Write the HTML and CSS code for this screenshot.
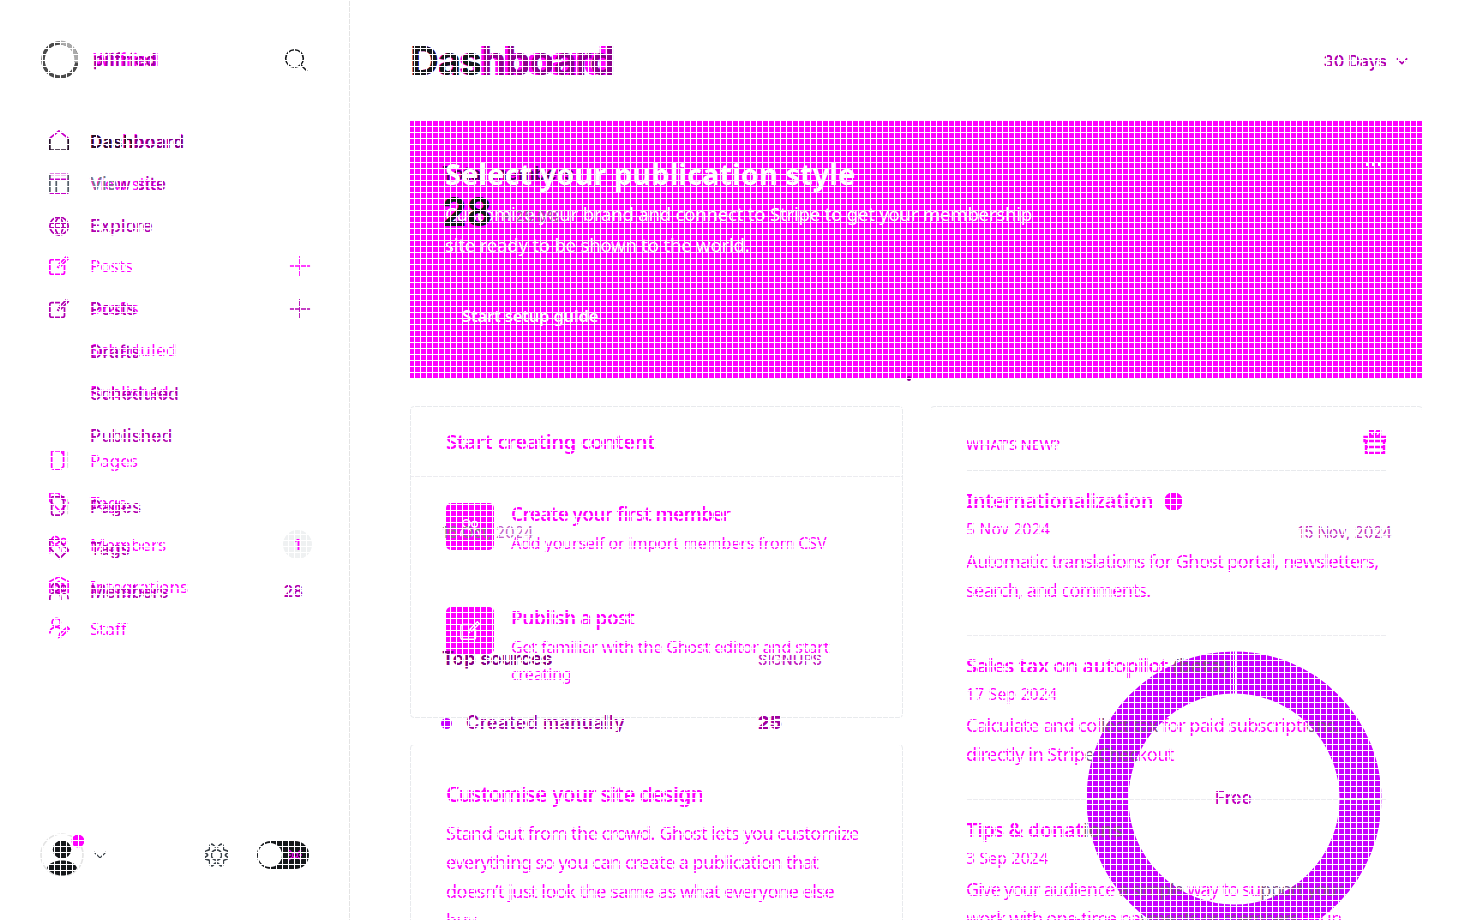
FILE: index.html
```html
<!DOCTYPE html>
<html lang="en">
<head>
<meta charset="utf-8">
<title>Dashboard</title>
<link rel="stylesheet" href="styles.css">
</head>
<body>
<svg width="0" height="0" class="defs" aria-hidden="true">
  <defs>
    <symbol id="edit" viewBox="0 0 24 24"><path d="M14 5H4a2 2 0 0 0-2 2v12a2 2 0 0 0 2 2h12a2 2 0 0 0 2-2v-9M10 12.500l2 1.500M12 10l8-8 2 2-8 8z"/></symbol>
    <symbol id="page" viewBox="0 0 24 24"><path d="M4 2h13v18M14 22H6a2 2 0 0 1-2-2V2M13 2l4 4M17 19l-3 3"/><path d="M21 3v18" stroke="#ddd"/></symbol>
    <symbol id="tag" viewBox="0 0 24 24"><path d="M2 2h9l11 11-9 9L2 11zM7 7h.1"/></symbol>
    <symbol id="members" viewBox="0 0 24 24"><circle cx="8" cy="8" r="4"/><circle cx="17" cy="9" r="3"/><path d="M2 22v-3c0-7 12-7 12 0v3M16 15c4-1 6 2 6 6"/></symbol>
    <symbol id="plus" viewBox="0 0 24 24"><path d="M12 1v22M1 12h22"/></symbol>
    <symbol id="chev" viewBox="0 0 14 8"><path d="M1 1l6 6 6-6"/></symbol>
  </defs>
</svg>
<div class="app">
  <aside class="sidebar">
    <header class="brand">
      <svg class="logo" viewBox="0 0 40 40"><circle cx="20" cy="20" r="17" stroke="#4a4a4a" stroke-width="3.500"/><path d="M20 2.500a17 17 0 0 1 16 20" stroke="#aaa" stroke-width="4"/></svg>
      <div class="stack brandname"><span class="b">Wilfried</span><span class="a">pilfried</span></div>
      <svg class="search" viewBox="0 0 24 24"><circle cx="10.500" cy="10.500" r="8.800"/><path d="M17 17l6 6"/></svg>
    </header>
    <div class="stack navs">
      <nav class="nav navb">
        <div class="row"><i></i><span class="bold">Dashboard</span></div>
        <div class="row"><i></i><span>View site</span></div>
        <div class="row g1"><svg><use href="#edit"/></svg><span>Posts</span><svg class="end"><use href="#plus"/></svg></div>
        <div class="row"><i></i><span>Drafts</span></div>
        <div class="row"><i></i><span class="wide">Scheduled</span></div>
        <div class="row"><i></i><span>Published</span></div>
        <div class="row g2"><svg><use href="#page"/></svg><span>Pages</span></div>
        <div class="row"><svg><use href="#tag"/></svg><span>Tags</span></div>
        <div class="row"><svg><use href="#members"/></svg><span>Members</span><b class="badge">1</b></div>
        <div class="row"><svg viewBox="0 0 24 24"><path d="M2 20V7l10-5 10 5v13M7 10l5-3 5 3v7l-5 3-5-3zM7 10l5 3 5-3M12 13v7"/></svg><span>Integrations</span></div>
        <div class="row"><svg viewBox="0 0 24 24"><circle cx="9" cy="6" r="4.500"/><path d="M2 18c0-8 9-8 12-5M12 22l1-4 8-7 2 2-8 8z"/></svg><span>Staff</span></div>
      </nav>
      <nav class="nav nava">
        <div class="row"><svg class="dark" viewBox="0 0 24 24"><path d="M2 9v13h20V9"/><path class="pk" d="M2 9l10-8 10 8"/></svg><span class="bold dark">Dash<em class="mix">board</em></span></div>
        <div class="row"><svg class="slate" viewBox="0 0 24 24"><path d="M2 2v20M22 2v20M9 8v14"/><path class="pk" d="M2 1.500h20M2 7h20M2 22h20"/></svg><span><em>Vie</em>w site</span></div>
        <div class="row"><svg viewBox="0 0 24 24"><circle cx="12" cy="12" r="10"/><path d="M2 9h20M2 14h20M12 2c-6 6-6 14 0 20M12 2c6 6 6 14 0 20"/></svg><span>Explore</span></div>
        <div class="row g3"><svg><use href="#edit"/></svg><span>Posts</span><svg class="end"><use href="#plus"/></svg></div>
        <div class="row"><i></i><span>Drafts</span></div>
        <div class="row"><i></i><span>Scheduled</span></div>
        <div class="row"><i></i><span>Published</span></div>
        <div class="row g4"><svg><use href="#page"/></svg><span>Pages</span></div>
        <div class="row"><svg><use href="#tag"/></svg><span>Tags</span></div>
        <div class="row"><svg><use href="#members"/></svg><span>Members</span><b class="count">28</b></div>
      </nav>
    </div>
    <footer class="foot">
      <svg class="avatar" viewBox="0 0 46 46"><circle cx="22" cy="23" r="21" fill="#fff" stroke="#e4e4e4"/><circle cx="22" cy="17.500" r="9.200" fill="#15171a"/><path d="M7 36c3-10 27-10 30 0-6 10-24 10-30 0z" fill="#15171a"/><circle cx="38" cy="9" r="6.500" fill="#f0f"/></svg>
      <svg class="fchev"><use href="#chev"/></svg>
      <svg class="gear" viewBox="0 0 24 24"><circle cx="12" cy="12" r="5"/><path d="M7.500 1.500c1.500 0 2 3 4.500 3s3-3 4.500-3 2.500 1.500 2 5c1 1.500 4.500.5 4.500 2.500s-2.500 1.500-2.500 3 2.500 1.500 2.500 3-3.500 1-4.500 2.500c.5 3.500-.5 5-2 5s-2-3-4.500-3-3 3-4.500 3-2.500-1.500-2-5C4.500 16 1 17 1 15s2.500-1.500 2.500-3S1 10.500 1 9s3.500-1 4.500-2.500c-.5-3.500.5-5 2-5z"/></svg>
      <div class="toggle"><u></u><svg viewBox="0 0 14 14"><circle cx="7" cy="7" r="2.500"/><path d="M1 2l3 3M13 2l-3 3M1 12l3-3M13 12l-3-3M0 7h3M14 7h-3"/></svg></div>
    </footer>
  </aside>
  <main class="main">
    <header class="top">
      <div class="stack h1"><span class="h1b">Dashboard</span><h1 class="h1a"><em>Das</em>hboard</h1></div>
      <div class="range"><span>30 Days</span><svg><use href="#chev"/></svg></div>
    </header>
    <section class="banner">
      <span class="over total">Total members</span>
      <h2>Select your publication style</h2>
      <p>Customize your brand and connect to Stripe to get your membership<br>site ready to be shown to the world.</p>
      <span class="over num">28</span>
      <span class="over trend">• 25.0%</span>
      <a>Start setup guide</a>
      <span class="more"><i></i><i></i><i></i></span>
      <span class="speck"></span>
    </section>
    <div class="cols">
      <div class="left">
        <section class="card create">
          <h3>Start creating content</h3>
          <div class="item">
            <div class="tile"><svg><use href="#members"/></svg></div>
            <div><h4>Create your first member</h4><p>Add yourself or import members from CSV</p></div>
          </div>
          <div class="item">
            <div class="tile"><svg><use href="#edit"/></svg></div>
            <div><h4>Publish a post</h4><p>Get familiar with the Ghost editor and start<br>creating</p></div>
          </div>
          <span class="over oct"><em>16 Oct,</em> 2024</span>
          <span class="over sources">Top sources</span>
          <span class="over signups">SIGNUPS</span>
        </section>
        <section class="card design">
          <h3>Customise your site design</h3>
          <p>Stand out from the crowd. Ghost lets you customize<br>everything so you can create a publication that<br>doesn’t just look the same as what everyone else<br>buy</p>
          <div class="over manual"><i></i><span>Created manually</span><b>25</b></div>
        </section>
      </div>
      <section class="card news">
        <svg class="over ring" viewBox="0 0 300 300"><circle cx="150" cy="150" r="126.500" stroke="#c800ff" stroke-width="42"/><path d="M149.500 2v43M151.500 2v43" stroke="#fff" stroke-width="1"/></svg>
        <div class="newshead"><span>WHAT’S NEW?</span><svg viewBox="0 0 24 24"><path d="M1.500 7h21v4h-21zM3 11v12h18V11M3 17h18M12 7V3M12 7L7 5V1h3l2 4 2-4h3v4z"/></svg></div>
        <article><h3>Internationalization<i></i></h3><time>5 Nov 2024</time><p>Automatic translations for Ghost portal, newsletters,<br>search, and comments.</p></article>
        <article><h3>Sales tax on autopilot <em>(beta)</em></h3><time>17 Sep 2024</time><p>Calculate and col<em>lect tax</em> for paid subscripti<em>ons,</em><br>directly in Strip<em>e Chec</em>kout</p></article>
        <article><h3>Tips &amp; donat<em>ions</em></h3><time>3 Sep 2024</time><p class="tight">Give your audience <em>a simple</em> way to su<em>pport your</em><br>work with one-time pa<em>yments or members</em>hip in</p></article>
        <span class="over nov">15 Nov, 2024</span>
        <span class="over free">Free</span>
      </section>
    </div>
  </main>
  <div class="mesh"></div>
</div>
</body>
</html>
```
FILE: styles.css
```css
* { box-sizing: border-box; }
body { margin: 0; background: #fff; font-family: "Noto Sans", "Open Sans", sans-serif; color: #f0f; }
h1, h2, h3, h4, p { margin: 0; }
em, i, u { font-style: normal; text-decoration: none; }
svg { fill: none; stroke: currentColor; stroke-width: 1.6; flex: none; }
.defs { position: absolute; }
.app { position: relative; width: 1483px; height: 920px; overflow: hidden; display: flex; }
.mesh { position: absolute; inset: 0; z-index: 9; pointer-events: none; background: repeating-linear-gradient(to right, #fff 0 1px, transparent 1px 6px), repeating-linear-gradient(to bottom, #fff 0 1px, transparent 1px 6px); }
.stack { display: grid; }
.stack > * { grid-area: 1 / 1; }
.over { position: absolute; font-family: Inter, sans-serif; line-height: 24px; white-space: nowrap; }

.sidebar { width: 350px; height: 920px; border-right: 1px solid #e4e4e4; display: flex; flex-direction: column; flex: none; }
.brand { height: 120px; padding: 0 41px 0 40px; display: flex; align-items: center; }
.logo { width: 40px; height: 40px; }
.brandname { margin-left: 13px; font: 600 17px/24px Inter, sans-serif; }
.brandname .b { letter-spacing: .1px; }
.brandname .a { color: #a000a0; font-weight: 600; letter-spacing: .7px; }
.search { width: 24px; height: 24px; margin-left: auto; color: #15171a; }
.nav { display: flex; flex-direction: column; }
.row { height: 42.4px; padding: 0 38px 0 48px; display: flex; align-items: center; font-size: 17px; }
.navb .row { height: 42px; }
.row > svg, .row > i { width: 22px; height: 22px; margin-right: 20px; stroke-width: 1.9; }
.row > svg.end { margin: 0 0 0 auto; }
.nava { color: #b000b0; font-family: Inter, sans-serif; }
.nava .row > span { font-weight: 500; font-size: 17.2px; letter-spacing: .15px; }
.nav .row > .bold { font-weight: 600; letter-spacing: .4px; }
.navb .wide { letter-spacing: .45px; }
.nava .dark { color: #26102a; }
.nava .slate { color: #56606a; }
.nava em { color: #778; }
.nava .mix { color: #800080; }
.pk { stroke: #c800c8; }
.g1 { margin-top: 40.500px; }
.g2 { margin-top: 26.500px; }
.g3 { margin-top: 40.4px; }
.g4 { margin-top: 28px; }
.badge { margin-left: auto; margin-right: -1px; width: 29px; height: 29px; border-radius: 50%; background: #eff1f2; display: grid; place-items: center; font: 600 14px Inter, sans-serif; }
.count { margin-left: auto; margin-right: 8px; font-weight: 600; font-size: 15.5px; }
.foot { margin-top: auto; height: 130px; padding: 0 40px 0 39px; display: flex; align-items: center; color: #394047; }
.avatar { width: 46px; height: 46px; stroke: none; margin-left: 1px; }
.fchev { width: 14px; height: 8px; margin-left: 7px; stroke-width: 1.2; }
.gear { width: 25px; height: 26px; margin-left: 97px; }
.toggle { width: 52px; height: 28px; margin-left: auto; border-radius: 14px; background: #15171a; padding: 2px 7px 2px 1px; display: flex; align-items: center; justify-content: space-between; color: #d0d; }
.toggle u { width: 24px; height: 24px; border-radius: 50%; background: #fff; }
.toggle svg { width: 14px; height: 14px; }

.main { width: 1012px; margin-left: 60px; flex: none; }
.top { height: 121px; display: flex; align-items: center; justify-content: space-between; padding-right: 14px; }
.h1 { font: 700 40px/48px Inter, sans-serif; }
.h1b { letter-spacing: -1.9px; }
.h1a { font: inherit; letter-spacing: -1px; color: #8b008b; }
.h1a em { color: #15171a; }
.range { display: flex; align-items: center; gap: 9px; color: #b000b0; font: 600 16px/24px Inter, sans-serif; }
.range svg { width: 12px; height: 8px; stroke-width: 2; }
.banner { position: relative; height: 257px; padding: 33px 35px; background: #f0f; color: #fff; }
.banner h2 { position: relative; font-size: 29px; line-height: 40px; letter-spacing: .05px; font-weight: 700; }
.banner p { position: relative; margin-top: 4px; font-size: 18.5px; line-height: 31px; letter-spacing: -.18px; }
.banner a { position: relative; display: inline-block; margin: 40px 0 0 17px; font-size: 16.5px; line-height: 32px; font-weight: 600; letter-spacing: -.15px; }
.total { left: 32px; top: 40px; font-size: 18.4px; font-weight: 600; color: #500060; }
.num { left: 32px; top: 79px; font-size: 39px; font-weight: 700; color: #15171a; }
.trend { left: 92px; top: 84px; font-size: 15px; color: #a050a0; }
.more { position: absolute; right: 41px; top: 42px; display: flex; gap: 3px; }
.more i { width: 3px; height: 3px; background: #fff; }
.speck { position: absolute; left: 497px; top: 255px; width: 4px; height: 5px; border-radius: 2px; background: #8b008b; }
.cols { display: flex; gap: 27px; margin-top: 28px; }
.left { width: 493px; flex: none; }
.card { position: relative; border: 1px solid #e8eaed; border-radius: 4px; }
.create { height: 312px; }
.create h3 { height: 70px; padding-left: 35px; border-bottom: 1px solid #ececf0; font-size: 20.5px; line-height: 69px; font-weight: 600; letter-spacing: -.5px; }
.item { display: flex; gap: 17px; height: 104px; padding: 26px 0 0 35px; }
.tile { width: 48px; height: 47px; flex: none; border-radius: 5px; background: #f0f; color: #fff; display: grid; place-items: center; }
.tile svg { width: 22px; height: 22px; }
.item h4 { margin-top: -4px; font-size: 19px; line-height: 30px; font-weight: 600; letter-spacing: -.65px; }
.item + .item h4 { letter-spacing: -.45px; }
.item p { margin-top: 1px; font-size: 16px; line-height: 27px; letter-spacing: -.11px; white-space: nowrap; }
.oct { left: 31px; top: 114px; font-size: 15.2px; color: #c060c8; }
.oct em { color: #808080; }
.sources { left: 31px; top: 239px; font-size: 18.2px; font-weight: 700; letter-spacing: .15px; color: #850085; }
.signups { left: 347px; top: 241px; font-size: 14.3px; font-weight: 500; color: #c020c0; }
.design { height: 280px; margin-top: 26px; padding: 32px 35px; }
.design h3 { font-size: 21px; line-height: 34px; font-weight: 600; letter-spacing: -.72px; }
.design p { margin-top: 8px; font-size: 18px; line-height: 29px; letter-spacing: -.48px; white-space: nowrap; }
.manual { left: 30px; top: -34px; display: flex; align-items: center; font-size: 18px; font-weight: 600; color: #a000a0; }
.manual i { width: 11px; height: 11px; border-radius: 50%; background: #c800ff; }
.manual span { width: 292px; margin-left: 14px; letter-spacing: .4px; }
.news { width: 493px; height: 620px; padding: 0 35px; flex: none; }
.newshead { position: relative; height: 64px; border-bottom: 1px solid #e8eaed; padding-top: 11px; display: flex; align-items: center; justify-content: space-between; font-size: 14.5px; font-weight: 500; letter-spacing: -.15px; }
.newshead svg { width: 24px; height: 24px; stroke-width: 2.4; margin-top: -4px; }
.news article { position: relative; height: 164.400px; padding-top: 14px; border-bottom: 1px solid #ececf0; }
.news article:nth-of-type(1) { height: 165px; }
.news article h3 { font-size: 20px; line-height: 32px; font-weight: 600; letter-spacing: -.4px; display: flex; align-items: center; white-space: pre; }
.news h3 i { width: 19px; height: 19px; border-radius: 50%; background: #f0f; margin-left: 11px; }
.news time { display: block; font-size: 15.5px; line-height: 24px; letter-spacing: .3px; }
.news p { margin-top: 6px; font-size: 18px; line-height: 29px; letter-spacing: -.57px; white-space: nowrap; }
.news article + article p { margin-top: 5px; letter-spacing: -.48px; }
.news article + article .tight { letter-spacing: -.75px; }
.news em { color: #805088; }
.ring { left: 153px; top: 242px; width: 300px; height: 300px; }
.nov { left: 367px; top: 114px; font-size: 15.2px; color: #c030c0; }
.free { left: 284px; top: 379px; font-size: 17.3px; font-weight: 600; color: #c000c0; }
```
